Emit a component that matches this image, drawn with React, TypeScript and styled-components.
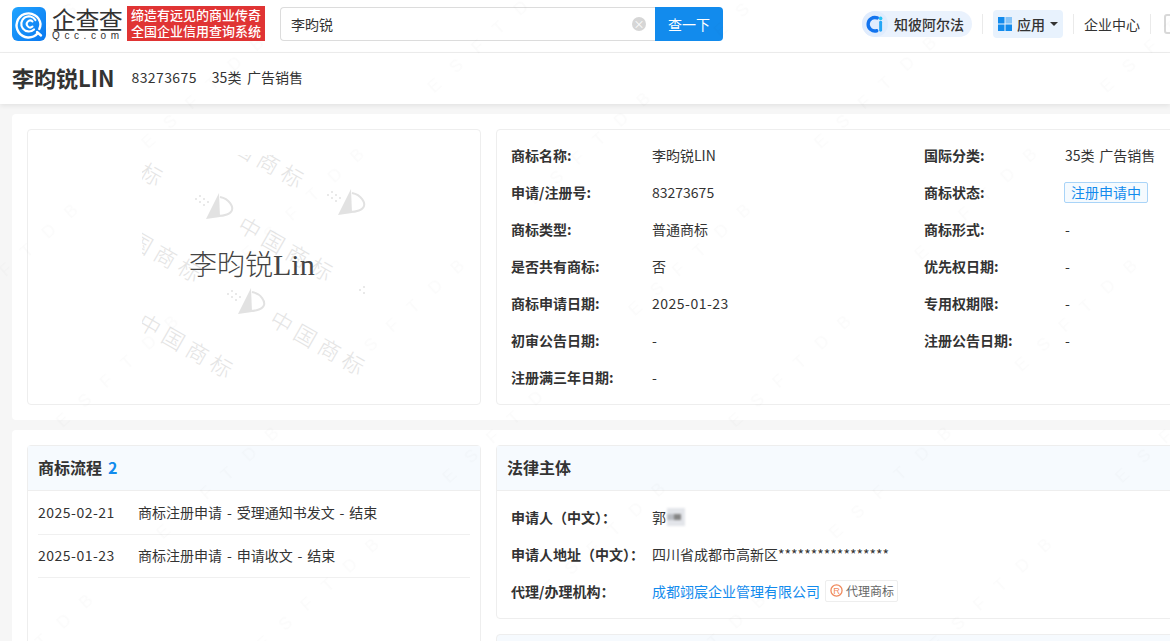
import React from "react";
import styled, { createGlobalStyle } from "styled-components";

const GlobalStyle = createGlobalStyle`
  html, body {
    margin: 0;
    height: 641px;
    overflow: hidden;
    background: #f6f6f6;
  }
  body {
    font-family: "Noto Sans CJK SC", "Open Sans", sans-serif;
    font-size: 14px;
    color: #333;
  }
  * { box-sizing: border-box; }
`;

const Page = styled.div`
  position: relative;
  width: 1170px;
  height: 641px;
  overflow: hidden;
`;

const Watermark = styled.svg`
  position: absolute;
  inset: 0;
  width: 100%;
  height: 100%;
  pointer-events: none;
`;

const Header = styled.header`
  display: flex;
  align-items: center;
  width: 1200px;
  height: 53px;
  padding: 0 0 5px 12px;
  background: #fff;
  border-bottom: 1px solid #eee;
  white-space: nowrap;
`;

const LogoWords = styled.div`
  display: flex;
  flex-direction: column;
  width: 72px;
  margin-left: 6px;
`;

const LogoName = styled.span`
  font-size: 24px;
  line-height: 23px;
  letter-spacing: -0.6px;
  color: #333;
`;

const LogoDomain = styled.span`
  font-family: "Liberation Sans", sans-serif;
  font-size: 10px;
  line-height: 11px;
  letter-spacing: 4.6px;
  color: #333;
`;

const Slogan = styled.div`
  width: 138px;
  height: 35px;
  margin-left: 3px;
  background: #e03434;
  color: #fff;
  font-size: 13px;
  font-weight: 500;
  line-height: 16px;
  text-align: center;
  padding-top: 1px;
`;

const SearchBox = styled.div`
  display: flex;
  width: 443px;
  height: 34px;
  margin-left: 15px;
`;

const SearchField = styled.div`
  flex: 1;
  display: flex;
  align-items: center;
  justify-content: space-between;
  padding: 0 9px 0 10px;
  border: 1px solid #dcdcdc;
  border-right: 0;
  border-radius: 4px 0 0 4px;
  font-size: 14px;
`;

const ClearIcon = styled.span`
  display: flex;
  align-items: center;
  justify-content: center;
  width: 14px;
  height: 14px;
  border-radius: 50%;
  background: #d6d6d6;
  color: #fff;
  font-size: 11px;
  line-height: 14px;
`;

const SearchButton = styled.button`
  width: 68px;
  border: 0;
  border-radius: 0 4px 4px 0;
  background: #128bed;
  color: #fff;
  font: inherit;
  font-size: 14px;
  padding: 0;
`;

const HeaderNav = styled.nav`
  display: flex;
  align-items: center;
  margin-left: 139px;
`;

const AlphaPill = styled.div`
  display: flex;
  align-items: center;
  width: 110px;
  height: 26px;
  border-radius: 13px;
  background: #eaf2fd;
  font-size: 14px;
  font-weight: 500;
  color: #333;
`;

const AlphaBadge = styled.span`
  display: flex;
  align-items: center;
  justify-content: center;
  width: 26px;
  height: 26px;
  margin-right: 6px;
  border-radius: 50%;
  background: #e0ecfd;
`;

const NavDivider = styled.span`
  width: 1px;
  height: 20px;
  margin: 0 10px;
  background: #eaeaea;
`;

const AppsButton = styled.div`
  display: flex;
  align-items: center;
  gap: 5px;
  width: 70px;
  height: 28px;
  padding-left: 5px;
  border-radius: 4px;
  background: #e8f2fd;
  font-size: 14px;
  font-weight: 500;
`;

const Caret = styled.span`
  width: 0;
  height: 0;
  border-left: 4px solid transparent;
  border-right: 4px solid transparent;
  border-top: 4px solid #333;
`;

const NavLink = styled.span`
  font-size: 14px;
  color: #333;
`;

const DeviceIcon = styled.span`
  width: 14px;
  height: 20px;
  margin-left: 3px;
  border: 2px solid #d8d8d8;
  border-radius: 3px;
`;

const TitleBar = styled.div`
  position: relative;
  display: flex;
  align-items: center;
  height: 51px;
  padding: 0 12px 4px;
  background: #fff;
  box-shadow: 0 2px 5px rgba(0, 0, 0, 0.08);
`;

const TitleName = styled.h1`
  margin: 0 17px 0 0;
  font-size: 22px;
  font-weight: 700;
  color: #333;
`;

const TitleMeta = styled.span`
  margin-right: 15px;
  font-size: 14px;
  word-spacing: 2.5px;
  letter-spacing: ${({ $spaced }: { $spaced?: boolean }) => ($spaced ? "0.4px" : "0")};
`;

const Content = styled.main`
  width: 1200px;
  margin-left: 12px;
  padding-top: 10px;
`;

const Card = styled.section`
  display: grid;
  grid-template-columns: 454px 1fr;
  gap: 15px;
  margin-bottom: 10px;
  padding: 15px;
  background: #fff;
  border-radius: 4px;
`;

const Panel = styled.div`
  border: 1px solid #eee;
  border-radius: 4px;
  background: #fff;
`;

const ImagePanel = styled(Panel)`
  display: flex;
  align-items: center;
  justify-content: center;
  height: 276px;
`;

const InfoGrid = styled.div`
  display: grid;
  grid-template-columns: 140px 273px 140px 1fr;
  grid-auto-rows: 37px;
  align-items: center;
  padding: 6px 15px 9px;
`;

const Label = styled.span`
  margin-left: -1px;
  font-size: 14px;
  font-weight: 700;
  color: #333;
  white-space: nowrap;
`;

const Value = styled.span<{ $tracking?: string }>`
  font-size: 14px;
  color: #333;
  word-spacing: 1.5px;
  letter-spacing: ${({ $tracking }) => $tracking || "0"};
`;

const StatusTag = styled.span`
  justify-self: start;
  display: inline-block;
  margin: 2px 0 0 -1px;
  padding: 0 6px;
  height: 21px;
  line-height: 19px;
  border: 1px solid #a9d4f8;
  border-radius: 2px;
  background: #f5fafe;
  color: #128bed;
  font-size: 14px;
`;

const PanelHeader = styled.div`
  height: 45px;
  padding-left: 10px;
  border-bottom: 1px solid #eee;
  background: #f6fafe;
  font-size: 16px;
  font-weight: 700;
  line-height: 42px;
  color: #333;
`;

const HeaderCount = styled.span`
  margin-left: 6px;
  color: #128bed;
`;

const FlowList = styled.div`
  height: 300px;
  padding: 1px 10px 0;
`;

const FlowRow = styled.div`
  display: flex;
  align-items: center;
  height: 43px;
  padding-bottom: 2px;
  border-bottom: 1px solid #f0f0f0;
`;

const FlowDate = styled.span`
  width: 100px;
  font-size: 14px;
  letter-spacing: 0.5px;
`;

const FlowText = styled.span`
  font-size: 14px;
  word-spacing: 1.75px;
`;

const RightStack = styled.div`
  display: flex;
  flex-direction: column;
  gap: 15px;
`;

const LegalGrid = styled.div`
  display: grid;
  grid-template-columns: 140px 1fr;
  grid-auto-rows: 37px;
  align-items: center;
  padding: 7px 15px 9px;
`;

const InlineValue = styled.span`
  display: flex;
  align-items: center;
  font-size: 14px;
`;

const BlurMask = styled.span`
  display: inline-block;
  width: 21px;
  height: 20px;
  filter: blur(0.8px);
  background:
    linear-gradient(#858585, #858585) 8px 7px / 7px 6px no-repeat,
    linear-gradient(#b9bcc2, #b9bcc2) 1px 7px / 7px 6px no-repeat,
    linear-gradient(#e3e5ea, #e3e5ea) 1px 1px / 18px 18px no-repeat;
`;

const CompanyLink = styled.span`
  font-size: 14px;
  color: #128bed;
`;

const AgentTag = styled.span`
  display: inline-flex;
  align-items: center;
  gap: 3px;
  height: 22px;
  margin-left: 5px;
  padding: 0 3px 0 4px;
  border: 1px solid #eee;
  border-radius: 2px;
  font-size: 12px;
  color: #666;
`;

const EmptyPanel = styled(Panel)`
  height: 60px;
  background: #f6fafe;
`;

const QccLogo = () => (
  <svg width="34" height="34" viewBox="0 0 34 34" style={{ flexShrink: 0 }}>
    <defs>
      <linearGradient id="qcc" x1="0" y1="0" x2="1" y2="1">
        <stop offset="0" stopColor="#20a4ff" />
        <stop offset="1" stopColor="#0a78f0" />
      </linearGradient>
    </defs>
    <rect width="34" height="34" rx="6" fill="url(#qcc)" />
    <path
      d="M25.5 26.5A12 12 0 1 1 28.5 17c0 1.8-.5 3.6-1.2 5"
      fill="none"
      stroke="#fff"
      strokeWidth="2.4"
      strokeLinecap="round"
    />
    <path d="M22 22.5A7.6 7.6 0 1 1 23.4 13" fill="none" stroke="#fff" strokeWidth="2.2" strokeLinecap="round" />
    <path d="M20.5 14.5A3.4 3.4 0 1 0 20.5 19.5" fill="none" stroke="#fff" strokeWidth="2" strokeLinecap="round" />
    <path d="M25 25l4 3.5" stroke="#fff" strokeWidth="2.4" strokeLinecap="round" />
  </svg>
);

const AlphaLogo = () => (
  <svg width="18" height="18" viewBox="0 0 16 16">
    <path d="M10 2.6A6 6 0 1 0 9.5 14" fill="none" stroke="#1273ee" strokeWidth="3" strokeLinecap="round" />
    <circle cx="13" cy="3" r="1.6" fill="#25c4f5" />
    <path d="M13 6.5v7" stroke="#25a6f5" strokeWidth="2.6" strokeLinecap="round" />
  </svg>
);

const AppsLogo = () => (
  <svg width="14" height="14" viewBox="0 0 14 14">
    <rect width="6.5" height="6.5" fill="#128bed" />
    <rect x="7.5" width="6.5" height="6.5" fill="#86c3f6" />
    <rect y="7.5" width="6.5" height="6.5" fill="#128bed" />
    <rect x="7.5" y="7.5" width="6.5" height="6.5" fill="#128bed" />
  </svg>
);

const AgentLogo = () => (
  <svg width="13" height="13" viewBox="0 0 14 14">
    <circle cx="7" cy="7" r="6" fill="none" stroke="#f08a5d" strokeWidth="1.4" />
    <text x="7" y="10.4" textAnchor="middle" fontSize="10" fontFamily="Liberation Sans" fill="#f08a5d">
      R
    </text>
  </svg>
);

const stampRows = [
  { x: 99, y: 66 },
  { x: -1, y: 163 },
  { x: 131, y: 160 },
  { x: -33, y: 67 },
  { x: -71, y: -29 },
  { x: 70, y: -27 },
];

const stampMarks = [
  { x: 72, y: 52 },
  { x: 204, y: 48 },
  { x: 104, y: 147 },
  { x: 236, y: 143 },
];

const TrademarkImage = () => (
  <svg width="225" height="225" viewBox="0 0 225 225">
    {stampRows.map((row) => (
      <text
        key={`${row.x}-${row.y}`}
        transform={`translate(${row.x} ${row.y}) rotate(30)`}
        fontFamily="Noto Sans CJK SC"
        fontSize="22"
        fontWeight="300"
        letterSpacing="5.5"
        dominantBaseline="central"
        fill="#e4e4e4"
      >
        中国商标
      </text>
    ))}
    {stampMarks.map((mark) => (
      <g key={mark.x} transform={`translate(${mark.x} ${mark.y})`} fill="#e2e2e2">
        <path d="M-8 12L5-14l1 24z" />
        <path d="M6-10C16-8 19 0 18 3c-1 4-8 6-14 6" fill="none" stroke="#e2e2e2" strokeWidth="2" />
        <circle cx="-18" cy="-8" r="1" />
        <circle cx="-14" cy="-11" r="1" />
        <circle cx="-14" cy="-5" r="1" />
        <circle cx="-10" cy="-8" r="1" />
        <circle cx="-10" cy="-2" r="1" />
        <circle cx="-6" cy="-5" r="1" />
      </g>
    ))}
    <text x="47" y="120" fontFamily="Noto Sans CJK SC" fontSize="28" fontWeight="300" fill="#444">
      李昀锐
      <tspan fontFamily="Liberation Serif" fontSize="30">
        Lin
      </tspan>
    </text>
  </svg>
);

const infoRows = [
  ["商标名称:", "李昀锐LIN", "国际分类:", "35类 广告销售"],
  ["申请/注册号:", "83273675", "商标状态:", "注册申请中"],
  ["商标类型:", "普通商标", "商标形式:", "-"],
  ["是否共有商标:", "否", "优先权日期:", "-"],
  ["商标申请日期:", "2025-01-23", "专用权期限:", "-"],
  ["初审公告日期:", "-", "注册公告日期:", "-"],
  ["注册满三年日期:", "-"],
];

const flowRows = [
  ["2025-02-21", "商标注册申请 - 受理通知书发文 - 结束"],
  ["2025-01-23", "商标注册申请 - 申请收文 - 结束"],
];

function App() {
  return (
    <Page>
      <GlobalStyle />
      <Header>
        <QccLogo />
        <LogoWords>
          <LogoName>企查查</LogoName>
          <LogoDomain>Qcc.com</LogoDomain>
        </LogoWords>
        <Slogan>
          缔造有远见的商业传奇
          <br />
          全国企业信用查询系统
        </Slogan>
        <SearchBox>
          <SearchField>
            李昀锐
            <ClearIcon>×</ClearIcon>
          </SearchField>
          <SearchButton>查一下</SearchButton>
        </SearchBox>
        <HeaderNav>
          <AlphaPill>
            <AlphaBadge>
              <AlphaLogo />
            </AlphaBadge>
            知彼阿尔法
          </AlphaPill>
          <NavDivider />
          <AppsButton>
            <AppsLogo />
            应用
            <Caret />
          </AppsButton>
          <NavDivider />
          <NavLink>企业中心</NavLink>
          <NavDivider />
          <DeviceIcon />
        </HeaderNav>
      </Header>

      <TitleBar>
        <TitleName>李昀锐LIN</TitleName>
        <TitleMeta $spaced>83273675</TitleMeta>
        <TitleMeta>35类 广告销售</TitleMeta>
      </TitleBar>

      <Content>
        <Card>
          <ImagePanel>
            <TrademarkImage />
          </ImagePanel>
          <Panel>
            <InfoGrid>
              {infoRows.map((row) =>
                row.map((cell, i) => {
                  if (i % 2 === 0) return <Label key={cell}>{cell}</Label>;
                  if (cell === "注册申请中") return <StatusTag key={cell}>{cell}</StatusTag>;
                  return (
                    <Value key={`${row[0]}-${i}`} $tracking={cell.startsWith("2025") ? "0.5px" : undefined}>
                      {cell}
                    </Value>
                  );
                })
              )}
            </InfoGrid>
          </Panel>
        </Card>

        <Card>
          <Panel>
            <PanelHeader>
              商标流程<HeaderCount>2</HeaderCount>
            </PanelHeader>
            <FlowList>
              {flowRows.map(([date, text]) => (
                <FlowRow key={date}>
                  <FlowDate>{date}</FlowDate>
                  <FlowText>{text}</FlowText>
                </FlowRow>
              ))}
            </FlowList>
          </Panel>
          <RightStack>
            <Panel>
              <PanelHeader>法律主体</PanelHeader>
              <LegalGrid>
                <Label>申请人（中文）：</Label>
                <InlineValue>
                  郭<BlurMask />
                </InlineValue>
                <Label>申请人地址（中文）：</Label>
                <InlineValue>四川省成都市高新区*****************</InlineValue>
                <Label>代理/办理机构：</Label>
                <InlineValue>
                  <CompanyLink>成都翊宸企业管理有限公司</CompanyLink>
                  <AgentTag>
                    <AgentLogo />
                    代理商标
                  </AgentTag>
                </InlineValue>
              </LegalGrid>
            </Panel>
            <EmptyPanel />
          </RightStack>
        </Card>
      </Content>

      <Watermark>
        <defs>
          <pattern id="mark" width="250" height="150" patternUnits="userSpaceOnUse" patternTransform="rotate(-42)">
            <text x="10" y="60" fontFamily="Liberation Sans" fontSize="17" letterSpacing="18" fill="#000" fillOpacity="0.014">
              ESFTDB
            </text>
          </pattern>
        </defs>
        <rect width="100%" height="100%" fill="url(#mark)" />
      </Watermark>
    </Page>
  );
}

export default App;
